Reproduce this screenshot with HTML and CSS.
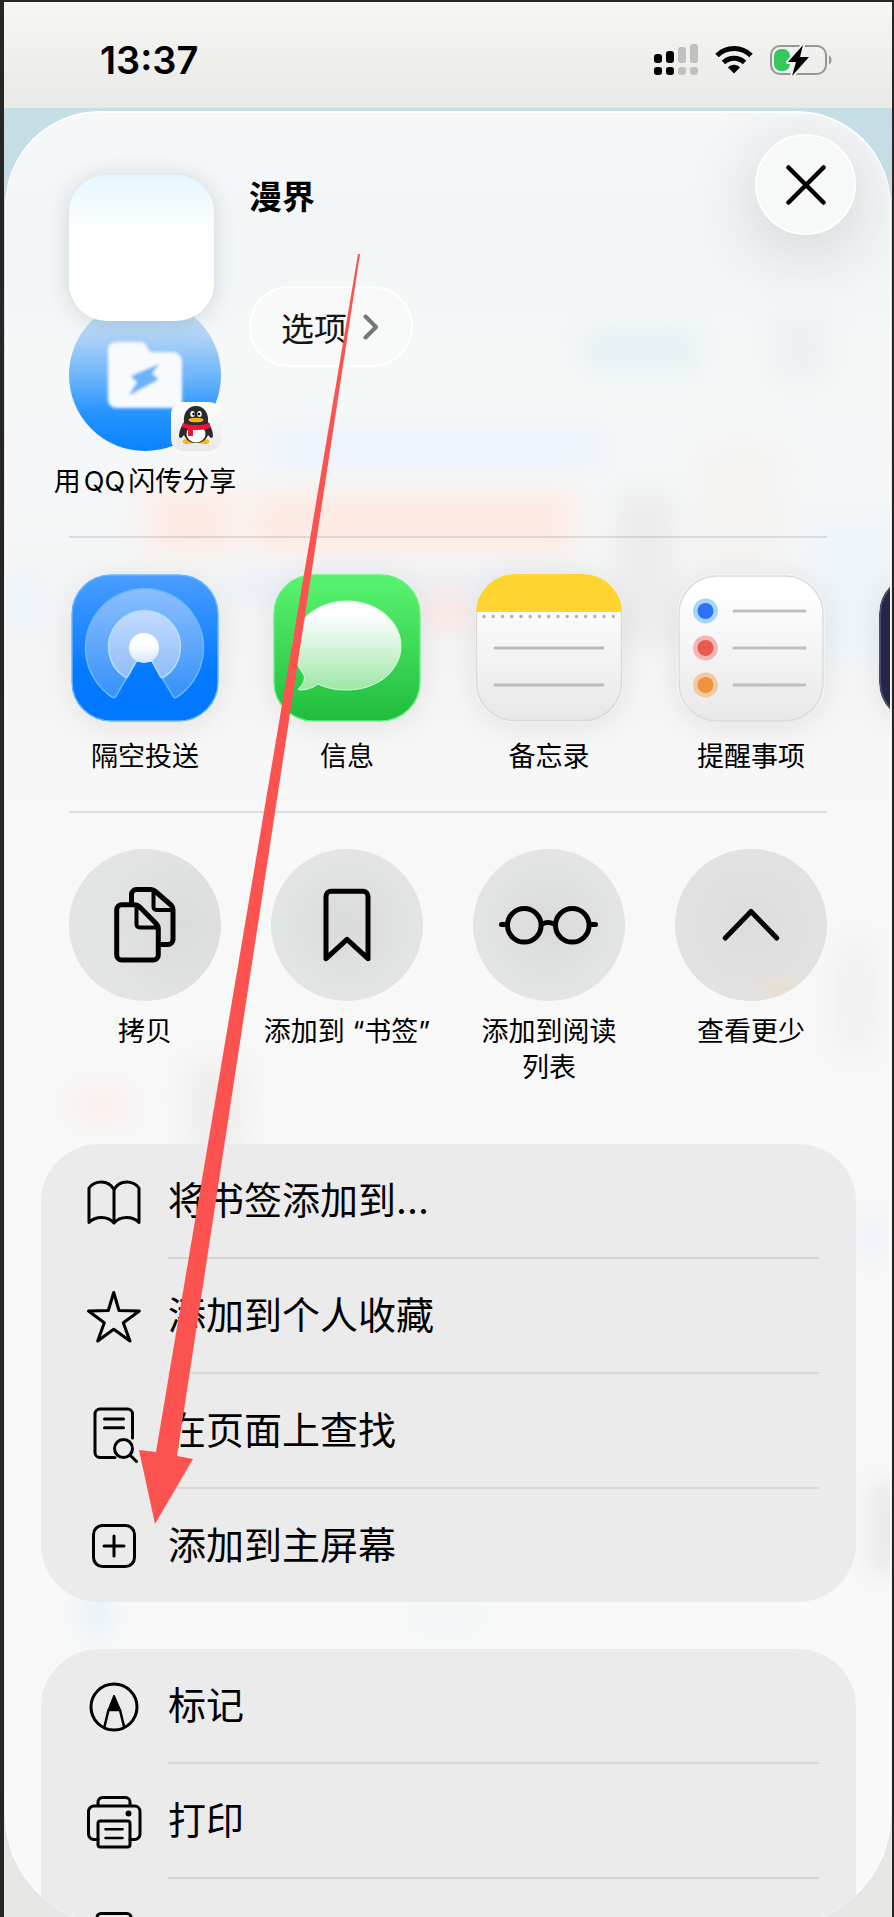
FILE: index.html
```html
<!DOCTYPE html>
<html lang="zh-CN">
<head>
    <meta charset="UTF-8">
    <meta name="viewport" content="width=device-width, initial-scale=1.0">
    <title>漫界</title>
    <link rel="stylesheet" href="styles.css">
</head>
<body>
    <div class="phone">
        <header class="status-bar">
            <time class="clock">13:37</time>
            <div class="status-icons">
                <svg width="45" height="32" viewBox="0 0 45 32">
                    <g fill="#000">
                        <rect x="0" y="10" width="8" height="9" rx="3"/>
                        <rect x="0" y="23" width="8" height="8" rx="3"/>
                        <rect x="12" y="7" width="8" height="12" rx="3"/>
                        <rect x="12" y="23" width="8" height="8" rx="3"/>
                    </g>
                    <g fill="#c0c0bf">
                        <rect x="24" y="3" width="8" height="16" rx="3"/>
                        <rect x="24" y="23" width="8" height="8" rx="3"/>
                        <rect x="36" y="0" width="8" height="19" rx="3"/>
                        <rect x="36" y="23" width="8" height="8" rx="3"/>
                    </g>
                </svg>
                <svg width="38" height="30" viewBox="0 0 38 30">
                    <g fill="none" stroke="#000" stroke-width="5">
                        <path d="M2 10.500a24.300 24.300 0 0 1 34 0"/>
                        <path d="M8.500 17.500a15 15 0 0 1 21 0"/>
                    </g>
                    <path d="M19 28.500l-6-6c3.300-3.700 8.700-3.700 12 0z"/>
                </svg>
                <svg width="64" height="34" viewBox="0 0 64 34">
                    <rect x="2" y="3" width="55" height="28" rx="9" fill="none" stroke="#979796" stroke-width="2"/>
                    <path d="M60 12.500c3.300 1 3.300 8 0 9z" fill="#979796"/>
                    <rect x="5" y="6" width="16" height="22" rx="7" fill="#34c759"/>
                    <path d="M34 2L19 19h8l-4 14 17-19h-9z" fill="#000" stroke="#f0f0ef" stroke-width="4" paint-order="stroke" stroke-linejoin="round"/>
                </svg>
            </div>
        </header>

        <main class="sheet">
            <!-- page content showing faintly through the glass -->
            <svg class="backdrop" width="886" height="1560" viewBox="0 0 886 1560" aria-hidden="true">
                <defs>
                    <filter id="haze" x="-50%" y="-50%" width="200%" height="200%"><feGaussianBlur stdDeviation="14"/></filter>
                </defs>
                <g filter="url(#haze)">
                    <rect x="575" y="218" width="120" height="40" fill="#e5f1f4"/>
                    <rect x="765" y="200" width="60" height="70" fill="#edf1f1"/>
                    <rect x="260" y="315" width="340" height="40" fill="#ecf3fc"/>
                    <rect x="140" y="378" width="90" height="62" fill="#feebe4"/>
                    <rect x="245" y="378" width="325" height="62" fill="#feebe4"/>
                    <rect x="610" y="378" width="60" height="150" fill="#ececec"/>
                    <rect x="690" y="330" width="90" height="130" fill="#f4f3f1"/>
                    <rect x="800" y="400" width="100" height="150" fill="#eef5fa"/>
                    <rect x="220" y="460" width="360" height="30" fill="#eaf0f8"/>
                    <rect x="0" y="460" width="40" height="60" fill="#edf4fb"/>
                    <rect x="415" y="475" width="50" height="40" fill="#fbe8e3"/>
                    <rect x="70" y="980" width="50" height="24" fill="#fdebe5"/>
                    <rect x="180" y="950" width="60" height="90" fill="#eeeeed"/>
                    <rect x="830" y="830" width="40" height="110" fill="#f1f0f1"/>
                    <rect x="75" y="1480" width="30" height="40" fill="#e3f1f8"/>
                    <rect x="405" y="1470" width="70" height="50" fill="#f2f8f8"/>
                    <rect x="865" y="1370" width="30" height="90" fill="#e6e6e6"/>
                    <rect x="850" y="1100" width="30" height="50" fill="#edf2f8"/>
                </g>
            </svg>

            <div class="sheet-header">
                <div class="thumb"></div>
                <div class="page-info">
                    <h1 class="page-title">漫界</h1>
                    <button type="button" class="options">选项
                        <svg width="16" height="26" viewBox="0 0 16 26"><path d="M2.500 2.500L13 13 2.500 23.500" fill="none" stroke="#757677" stroke-width="4" stroke-linecap="round" stroke-linejoin="round"/></svg>
                    </button>
                </div>
                <button type="button" class="close" aria-label="关闭">
                    <svg width="40" height="40" viewBox="0 0 40 40"><path d="M2.500 2.500l35 35M37.500 2.500l-35 35" stroke="#000" stroke-width="4.500" stroke-linecap="round"/></svg>
                </button>
            </div>

            <section class="row contacts">
                <button type="button" class="item">
                    <svg class="art" width="152" height="152" viewBox="0 0 152 152">
                        <defs>
                            <linearGradient id="qqBlue" x1="0" y1="0" x2="0" y2="1">
                                <stop offset="0" stop-color="#d3e6f5"/>
                                <stop offset="0.250" stop-color="#aed3f7"/>
                                <stop offset="0.550" stop-color="#62b0fb"/>
                                <stop offset="0.750" stop-color="#2693ff"/>
                                <stop offset="1" stop-color="#0a84ff"/>
                            </linearGradient>
                            <linearGradient id="badge" x1="0" y1="0" x2="0" y2="1">
                                <stop offset="0" stop-color="#fff"/>
                                <stop offset="1" stop-color="#e9e9e9"/>
                            </linearGradient>
                            <filter id="soft" x="-10%" y="-10%" width="120%" height="120%"><feGaussianBlur stdDeviation="1.500"/></filter>
                        </defs>
                        <circle cx="76" cy="76" r="76" fill="url(#qqBlue)"/>
                        <g filter="url(#soft)">
                            <path d="M48 43h23c3 0 5 1 6 3l2 4c1 2 3 3 5 3h19c6 0 10 4 10 10v46H48c-6 0-9-4-9-9V52c0-6 3-9 9-9z" fill="#f8fafc"/>
                            <path d="M90 65L64 76c-2 1-2 2-1 3l5 4-7 11c-1 2 0 2 2 1l24-13c2-1 2-3 1-4l-5-3z" fill="#6ab3fb"/>
                        </g>
                        <rect x="102" y="103" width="50" height="49" rx="12" fill="url(#badge)"/>
                        <g transform="translate(102 103)">
                            <path d="M15 37c-5 1-4 5 1 5 4 0 7-1 9-2 2 1 5 2 9 2 5 0 6-4 1-5z" fill="#fbb40d"/>
                            <path d="M13 20c-3 5-5 9-5 14 1 4 3 1 5-1 2 5 6 8 12 8s10-3 12-8c2 2 4 5 5 1 0-5-2-9-5-14 1-9-4-16-12-16S12 11 13 20z" fill="#2b2b2b"/>
                            <ellipse cx="25" cy="32" rx="9.500" ry="8.500" fill="#fff"/>
                            <ellipse cx="21.500" cy="12" rx="2.200" ry="3" fill="#fff"/>
                            <ellipse cx="28.500" cy="12" rx="2.200" ry="3" fill="#fff"/>
                            <circle cx="22.500" cy="12" r="1.200"/>
                            <circle cx="28" cy="12" r="1.200"/>
                            <ellipse cx="25" cy="18" rx="7.500" ry="2.300" fill="#fbb40d"/>
                            <path d="M12 21c8 3 18 3 27 0v5c-5 2-10 2-17 2v6h-5v-7l-6-2z" fill="#f4103d"/>
                        </g>
                    </svg>
                    <span class="label">用<span class="latin">QQ</span>闪传分享</span>
                </button>
            </section>

            <hr class="divider">

            <section class="row apps">
                <button type="button" class="item">
                    <svg class="art" width="148" height="148" viewBox="0 0 148 148">
                        <defs>
                            <linearGradient id="airBlue" x1="0" y1="0" x2="0" y2="1">
                                <stop offset="0" stop-color="#4b9eff"/>
                                <stop offset="0.650" stop-color="#047aff"/>
                                <stop offset="1" stop-color="#0077ff"/>
                            </linearGradient>
                            <linearGradient id="airRing" x1="0" y1="0" x2="0" y2="1">
                                <stop offset="0" stop-color="#8cbfff"/>
                                <stop offset="1" stop-color="#3591fa"/>
                            </linearGradient>
                            <linearGradient id="airCore" x1="0" y1="0" x2="0" y2="1">
                                <stop offset="0" stop-color="#c3dbff"/>
                                <stop offset="1" stop-color="#8fbdf9"/>
                            </linearGradient>
                            <linearGradient id="airDot" x1="0" y1="0" x2="0" y2="1">
                                <stop offset="0.400" stop-color="#fff"/>
                                <stop offset="1" stop-color="#d6e6fd"/>
                            </linearGradient>
                        </defs>
                        <rect x="1" y="1" width="146" height="146" rx="39" fill="url(#airBlue)" stroke="#64b5ff" stroke-width="1.500"/>
                        <path d="M65.500 87L45 122c-1 2-2 2-4 1A59 59 0 1 1 106 123c-2 1-3 1-4-1L81 87z" fill="url(#airRing)" stroke="#6bb9ff" stroke-width="1.500"/>
                        <path d="M65.500 87L57 102c-1 2-2 2-3 1A36 36 0 1 1 93 103c-2 1-3 1-4-1L81 87z" fill="url(#airCore)" stroke="#b5e0ff" stroke-width="1.500"/>
                        <circle cx="73" cy="74" r="15" fill="url(#airDot)"/>
                    </svg>
                    <span class="label">隔空投送</span>
                </button>
                <button type="button" class="item">
                    <svg class="art" width="148" height="148" viewBox="0 0 148 148">
                        <defs>
                            <linearGradient id="msgGreen" x1="0" y1="0" x2="0" y2="1">
                                <stop offset="0.080" stop-color="#55f16d"/>
                                <stop offset="1" stop-color="#20bc3c"/>
                            </linearGradient>
                            <linearGradient id="bubble" x1="0" y1="0" x2="0" y2="1">
                                <stop offset="0.150" stop-color="#fff"/>
                                <stop offset="1" stop-color="#9ee6a8"/>
                            </linearGradient>
                        </defs>
                        <rect x="1" y="1" width="146" height="146" rx="39" fill="url(#msgGreen)" stroke="#6bee82" stroke-width="1.500"/>
                        <path d="M74 27c30 0 54 20 54 45s-24 44-54 44c-11 0-21-2-29-6-5 4-12 6-18 6-2 0-2-1-1-2 4-3 6-8 5-13-6-8-11-18-11-29 0-25 24-45 54-45z" fill="url(#bubble)" stroke="#d5fadb" stroke-width="1"/>
                    </svg>
                    <span class="label">信息</span>
                </button>
                <button type="button" class="item">
                    <svg class="art" width="148" height="148" viewBox="0 0 148 148">
                        <defs>
                            <linearGradient id="paper" x1="0" y1="0" x2="0" y2="1">
                                <stop offset="0.100" stop-color="#fff"/>
                                <stop offset="1" stop-color="#e8e8e9"/>
                            </linearGradient>
                            <clipPath id="noteClip"><rect x="1" y="0" width="146" height="148" rx="39"/></clipPath>
                        </defs>
                        <rect x="1.500" y="1.500" width="145" height="145" rx="38" fill="url(#paper)" stroke="#d9d9da" stroke-width="1.500"/>
                        <rect x="0" y="0" width="148" height="38" fill="#ffd42e" clip-path="url(#noteClip)"/>
                        <path d="M9 42.500H140" stroke="#b1aea5" stroke-width="3.400" stroke-linecap="round" stroke-dasharray="0 9.240"/>
                        <path d="M20 74H128M20 111H128" stroke="#bcbcbd" stroke-width="3" stroke-linecap="round"/>
                    </svg>
                    <span class="label">备忘录</span>
                </button>
                <button type="button" class="item">
                    <svg class="art" width="148" height="148" viewBox="0 0 148 148">
                        <rect x="2" y="2" width="144" height="145" rx="38" fill="url(#paper)" stroke="#dcdcdd" stroke-width="1.500"/>
                        <circle cx="28.500" cy="37" r="12.500" fill="#a5d7fa"/>
                        <circle cx="28.500" cy="37" r="8" fill="#2f70f5"/>
                        <circle cx="28.500" cy="74" r="12.500" fill="#f3b6b2"/>
                        <circle cx="28.500" cy="74" r="8" fill="#e9594f"/>
                        <circle cx="28.500" cy="111" r="12.500" fill="#f0cba0"/>
                        <circle cx="28.500" cy="111" r="8" fill="#f0923f"/>
                        <path d="M57 37h71M57 74h71M57 111h71" stroke="#bfbfc0" stroke-width="3" stroke-linecap="round"/>
                    </svg>
                    <span class="label">提醒事项</span>
                </button>
                <button type="button" class="item" aria-label="更多">
                    <svg class="art" width="148" height="148" viewBox="0 0 148 148">
                        <rect x="1" y="1" width="146" height="146" rx="39" fill="#25274a" stroke="#4a4c68" stroke-width="2"/>
                    </svg>
                </button>
            </section>

            <hr class="divider">

            <section class="row actions">
                <button type="button" class="item">
                    <span class="circle circle-copy">
                        <svg class="stroke-icon" width="152" height="152" viewBox="0 0 152 152">
                            <path d="M62.500 54v-8.500a5 5 0 0 1 5-5H82c2 0 3.500 1 4.500 2L102 56c1.500 1.500 2 3 2 4.500V90.500a5 5 0 0 1-5 5h-8"/>
                            <path d="M84.500 42v16a3 3 0 0 0 3 3H103" stroke-width="4"/>
                            <path d="M52.700 55.700H66c2 0 3.500 1 4.500 2L87 74.500c1.500 1.500 2.300 3 2.300 4.500v27a5 5 0 0 1-5 5H52.700a5 5 0 0 1-5-5V60.700a5 5 0 0 1 5-5z"/>
                            <path d="M67.500 57v18.500a3 3 0 0 0 3 3H88" stroke-width="4"/>
                        </svg>
                    </span>
                    <span class="label">拷贝</span>
                </button>
                <button type="button" class="item">
                    <span class="circle">
                        <svg class="stroke-icon" width="152" height="152" viewBox="0 0 152 152">
                            <path d="M55 109.700V47.300a5 5 0 0 1 5-5h32a5 5 0 0 1 5 5v62.400L76 90.300z"/>
                        </svg>
                    </span>
                    <span class="label">添加到 “书签”</span>
                </button>
                <button type="button" class="item">
                    <span class="circle">
                        <svg class="stroke-icon" width="152" height="152" viewBox="0 0 152 152">
                            <circle cx="51.300" cy="76.300" r="16.800"/>
                            <circle cx="99.300" cy="76.300" r="16.800"/>
                            <path d="M69 75c4-2 8-2 12 0M28.500 75.500H34M117 75.500h5.500"/>
                        </svg>
                    </span>
                    <span class="label">添加到阅读<br>列表</span>
                </button>
                <button type="button" class="item">
                    <span class="circle circle-less">
                        <svg class="stroke-icon" width="152" height="152" viewBox="0 0 152 152">
                            <path d="M50.300 89L76 62.500 101.700 89"/>
                        </svg>
                    </span>
                    <span class="label">查看更少</span>
                </button>
            </section>

            <ul class="group">
                <li>
                    <button type="button" class="action">
                        <svg class="list-icon" width="56" height="56" viewBox="0 0 56 56">
                            <path d="M28 15.500C25 10.500 20.500 8 15.500 8 10 8 5.500 10.500 3 14v34.500c3.500-3.500 7.500-5 12.500-5s9.500 2 12.500 5.500c3-3.500 7.500-5.500 12.500-5.500s9 1.500 12.500 5V14C50.500 10.500 46 8 40.500 8 35.500 8 31 10.500 28 15.500zM28 15.500V49"/>
                        </svg>
                        <span class="action-text">将书签添加到...</span>
                    </button>
                </li>
                <li>
                    <button type="button" class="action">
                        <svg class="list-icon" width="56" height="56" viewBox="0 0 56 56">
                            <path d="M27.700 3.500L33 21.500l20.300.500-16 11.700L44 52 27.700 40.300 11.700 52l6.600-18.300L2.500 22l19.800-.500z"/>
                        </svg>
                        <span class="action-text">添加到个人收藏</span>
                    </button>
                </li>
                <li>
                    <button type="button" class="action">
                        <svg class="list-icon" width="56" height="56" viewBox="0 0 56 56">
                            <path d="M29 53.500H14a5 5 0 0 1-5-5V10a5 5 0 0 1 5-5h27.500a5 5 0 0 1 5 5v24M18.500 15H37.500M18.500 23.700H37.500"/>
                            <circle cx="37.500" cy="44.500" r="9"/>
                            <path d="M44.500 51.500l6 6"/>
                        </svg>
                        <span class="action-text">在页面上查找</span>
                    </button>
                </li>
                <li>
                    <button type="button" class="action">
                        <svg class="list-icon" width="56" height="56" viewBox="0 0 56 56">
                            <rect x="7.500" y="7.500" width="41" height="41" rx="9"/>
                            <path d="M28 18v20M18 28h20"/>
                        </svg>
                        <span class="action-text">添加到主屏幕</span>
                    </button>
                </li>
            </ul>

            <ul class="group">
                <li>
                    <button type="button" class="action">
                        <svg class="list-icon" width="56" height="56" viewBox="0 0 56 56">
                            <circle cx="28" cy="28" r="23"/>
                            <path d="M18.500 47.500L22.500 31h11.500l4 16.500" stroke-width="2.500"/>
                            <path d="M28 17l-5.500 14h11.500z" fill="#000" stroke-width="2"/>
                        </svg>
                        <span class="action-text">标记</span>
                    </button>
                </li>
                <li>
                    <button type="button" class="action">
                        <svg class="list-icon" width="56" height="56" viewBox="0 0 56 56">
                            <path d="M12 45.500H8a5.500 5.500 0 0 1-5.500-5.500V17.500a5.500 5.500 0 0 1 5.500-5.500h40.500a5.500 5.500 0 0 1 5.500 5.500V40a5.500 5.500 0 0 1-5.500 5.500H44M12 12V8a4.500 4.500 0 0 1 4.500-4.500h23A4.500 4.500 0 0 1 44 8v4"/>
                            <rect x="12" y="27" width="32" height="26" rx="2.500"/>
                            <path d="M19.500 35.300h17M19.500 44h17" stroke-width="2.500"/>
                            <circle cx="42.500" cy="19.500" r="3" fill="#000" stroke="none"/>
                        </svg>
                        <span class="action-text">打印</span>
                    </button>
                </li>
                <li>
                    <button type="button" class="action" aria-label="更多">
                        <svg class="list-icon" width="56" height="56" viewBox="0 0 56 56">
                            <rect x="11" y="5.500" width="34" height="46" rx="4"/>
                        </svg>
                    </button>
                </li>
            </ul>
        </main>

        <!-- pointer to "add to home screen" -->
        <svg class="arrow" width="221" height="1271" viewBox="0 0 221 1271">
            <path d="M219 0h2L38 1202l16 3-38 65L0 1196l17 2z" fill="#fc5250"/>
        </svg>
    </div>
</body>
</html>
```

FILE: styles.css
```css
* {
    box-sizing: border-box;
}
body {
    margin: 0;
    background-color: #282625;
    color: #000;
    font-family: Inter, "Noto Sans CJK SC", sans-serif;
}
button {
    padding: 0;
    border: none;
    background: none;
    color: inherit;
    font: inherit;
    cursor: pointer;
}
svg {
    display: block;
    flex: none;
}

.phone {
    position: relative;
    display: flex;
    flex-direction: column;
    height: 100vh;
    padding: 2px 2px 0 4px;
    overflow: hidden;
}
.phone::before {
    content: "";
    position: absolute;
    inset: 108px 2px 0 4px;
    background: linear-gradient(#c5dfe5, #c9dbe5 120px, #e7e7e5 500px);
}

/* Status bar */
.status-bar {
    display: flex;
    justify-content: space-between;
    align-items: center;
    height: 106px;
    padding: 10px 59px 0 96px;
    background: linear-gradient(#f6f6f5, #e9e9e8);
}
.clock {
    font-size: 38px;
    font-weight: 600;
    line-height: 48px;
}
.status-icons {
    display: flex;
    align-items: center;
    gap: 16px;
}

/* Share sheet */
.sheet {
    position: relative;
    isolation: isolate;
    flex: 1;
    min-height: 0;
    margin: 3px 1px -8px;
    border: solid #fff;
    border-width: 2px 1px 0;
    border-radius: 95px 95px 110px 110px;
    overflow: hidden;
    background: linear-gradient(#f6f7f9, #f2f6f7 150px, #f6f8f8 260px, #f5f7f8 400px, #f4f4f4 520px, #f8f8f8 700px, #f9f9f9);
}
.backdrop {
    position: absolute;
    top: 0;
    left: 0;
    z-index: -1;
}
.sheet-header {
    position: relative;
    z-index: 1;
    display: flex;
    align-items: flex-start;
    padding: 21px 34px 0 63px;
}
.thumb {
    width: 145px;
    height: 146px;
    margin-top: 41px;
    border-radius: 38px;
    background: linear-gradient(#e6f6fe, #fff 60px);
    box-shadow: 0 2px 22px rgba(60, 80, 90, 0.2);
}
.page-info {
    flex: 1;
    display: flex;
    flex-direction: column;
    align-items: flex-start;
    justify-content: space-between;
    height: 192px;
    margin: 41px 0 0 35px;
}
.page-title {
    margin: 0;
    font-size: 33px;
    font-weight: 600;
    line-height: 44px;
}
.options {
    display: flex;
    align-items: center;
    gap: 16px;
    height: 81px;
    padding: 0 32px 0 30px;
    border: 2px solid #fff;
    border-radius: 41px;
    background-color: rgba(249, 250, 250, 0.7);
    color: #151515;
    font-size: 33px;
}
.close {
    display: flex;
    align-items: center;
    justify-content: center;
    width: 101px;
    height: 101px;
    border: 2px solid #fff;
    border-radius: 50%;
    background-color: #f7f9f8;
    box-shadow: 0 14px 70px rgba(50, 60, 65, 0.2);
}

/* Icon rows */
.row {
    display: grid;
    grid-auto-flow: column;
    grid-auto-columns: 152px;
    justify-content: start;
    column-gap: calc((100% - 608px) / 3);
    margin: 0 63px;
}
.contacts {
    margin-top: -68px;
}
.item {
    display: flex;
    flex-direction: column;
    align-items: center;
}
.label {
    margin-top: 13px;
    font-size: 27px;
    line-height: 36px;
    white-space: nowrap;
}
.latin {
    margin: 0 3px;
}
.apps .label {
    margin-top: 17px;
}
.apps .art {
    border-radius: 39px;
    box-shadow: 0 4px 30px rgba(0, 0, 0, 0.08);
}
.divider {
    height: 2px;
    margin: 36px 63px;
    border: none;
    background-color: rgba(60, 60, 67, 0.14);
}
.circle {
    border-radius: 50%;
    background: radial-gradient(circle, #d9dada, #e3e4e4 65%);
}
.circle-copy {
    background: radial-gradient(circle at 75% 50%, #d8dcda, #e3e4e4 60%);
}
.circle-less {
    background:
        radial-gradient(ellipse 30px 20px at 105px 140px, #e9dfd2, transparent),
        radial-gradient(circle, #dcdddd, #e2e2e2 65%);
}
.stroke-icon {
    fill: none;
    stroke: #000;
    stroke-width: 5;
    stroke-linecap: round;
    stroke-linejoin: round;
}

/* Action lists */
.group {
    margin: 47px 34px 0 35px;
    padding: 0;
    border-radius: 58px;
    background-color: #ebebeb;
    list-style: none;
}
.actions + .group {
    margin-top: 58px;
}
.action {
    display: flex;
    align-items: center;
    gap: 26px;
    width: 100%;
    height: 115px;
    padding: 0 37px 0 45px;
    text-align: left;
}
.action-text {
    flex: 1;
    border-bottom: 2px solid #d6d6d6;
    font-size: 38px;
    line-height: 113px;
}
li:last-child .action {
    height: 113px;
}
li:last-child .action-text {
    border-bottom: none;
}
.list-icon {
    overflow: visible;
    fill: none;
    stroke: #000;
    stroke-width: 3;
    stroke-linecap: round;
    stroke-linejoin: round;
}

.arrow {
    position: absolute;
    top: 254px;
    left: 139px;
    z-index: 2;
    pointer-events: none;
}
```
